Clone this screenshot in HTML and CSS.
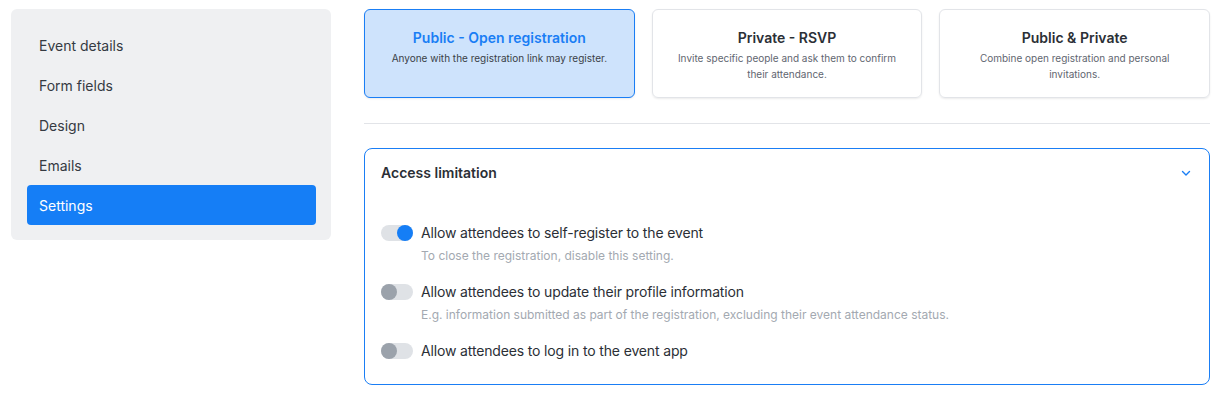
FILE: index.html
```html
<!DOCTYPE html>
<html lang="en">
<head>
  <meta charset="UTF-8">
  <meta name="viewport" content="width=device-width, initial-scale=1.0">
  <title>Event settings</title>
  <link rel="stylesheet" href="styles.css">
</head>
<body>
  <div class="layout">
    <nav class="sidebar">
      <a class="nav-item" href="#">Event details</a>
      <a class="nav-item" href="#">Form fields</a>
      <a class="nav-item" href="#">Design</a>
      <a class="nav-item" href="#">Emails</a>
      <a class="nav-item active" href="#">Settings</a>
    </nav>

    <main class="content">
      <div class="reg-types">
        <div class="reg-card selected">
          <div class="reg-title">Public - Open registration</div>
          <div class="reg-desc">Anyone with the registration link may register.</div>
        </div>
        <div class="reg-card">
          <div class="reg-title">Private - RSVP</div>
          <div class="reg-desc">Invite specific people and ask them to confirm their attendance.</div>
        </div>
        <div class="reg-card">
          <div class="reg-title">Public &amp; Private</div>
          <div class="reg-desc">Combine open registration and personal invitations.</div>
        </div>
      </div>

      <hr class="divider">

      <section class="panel">
        <div class="panel-header">
          <span>Access limitation</span>
          <svg class="chevron" width="12" height="12" viewBox="0 0 12 12" fill="none">
            <path d="M2.5 4.5 L6 8 L9.5 4.5" stroke="#1a7ef5" stroke-width="1.4" stroke-linecap="round" stroke-linejoin="round"/>
          </svg>
        </div>
        <div class="panel-body">
          <div class="setting">
            <span class="toggle on"><span class="knob"></span></span>
            <div class="setting-text">
              <div class="setting-label">Allow attendees to self-register to the event</div>
              <div class="setting-hint">To close the registration, disable this setting.</div>
            </div>
          </div>
          <div class="setting">
            <span class="toggle"><span class="knob"></span></span>
            <div class="setting-text">
              <div class="setting-label">Allow attendees to update their profile information</div>
              <div class="setting-hint">E.g. information submitted as part of the registration, excluding their event attendance status.</div>
            </div>
          </div>
          <div class="setting">
            <span class="toggle"><span class="knob"></span></span>
            <div class="setting-text">
              <div class="setting-label">Allow attendees to log in to the event app</div>
            </div>
          </div>
        </div>
      </section>
    </main>
  </div>
</body>
</html>
```

FILE: styles.css
```css
body {
  margin: 0;
  padding: 9px 11px;
  font-family: Inter, "Noto Sans", sans-serif;
  color: #2b2f36;
  background: #fff;
}

.layout {
  display: flex;
  align-items: flex-start;
  gap: 33px;
}

.sidebar {
  width: 320px;
  box-sizing: border-box;
  padding: 16px 15px 15px 16px;
  background-color: #eff0f2;
  border-radius: 6px;
  display: flex;
  flex-direction: column;
}

.nav-item {
  height: 40px;
  display: flex;
  align-items: center;
  padding-left: 12px;
  font-size: 14px;
  color: #353a42;
  text-decoration: none;
  border-radius: 4px;
}

.nav-item.active {
  background-color: #157ef6;
  color: #fff;
}

.content {
  flex: 1;
  min-width: 0;
}

.reg-types {
  display: grid;
  grid-template-columns: repeat(3, 1fr);
  gap: 17px;
}

.reg-card {
  height: 89px;
  box-sizing: border-box;
  padding: 19px 24px 0;
  border: 1px solid #e2e4e8;
  border-radius: 6px;
  text-align: center;
  box-shadow: 0 1px 2px rgba(0, 0, 0, 0.08);
}

.reg-card.selected {
  background-color: #cee3fc;
  border-color: #1a7ef5;
}

.reg-title {
  font-size: 14px;
  font-weight: 600;
  line-height: 18px;
  color: #2b2f36;
}

.reg-card.selected .reg-title {
  color: #1a7ef5;
}

.reg-desc {
  margin-top: 3px;
  font-size: 10px;
  line-height: 16px;
  color: #5f6670;
}

.reg-card.selected .reg-desc {
  color: #3a3f47;
}

.divider {
  margin: 25px 0 24px;
  border: 0;
  border-top: 1px solid #e2e4e8;
}

.panel {
  height: 237px;
  box-sizing: border-box;
  border: 1px solid #1a7ef5;
  border-radius: 8px;
}

.panel-header {
  display: flex;
  align-items: center;
  justify-content: space-between;
  height: 47px;
  padding: 0 17px 0 16px;
  font-size: 14px;
  font-weight: 600;
}

.panel-body {
  padding: 28px 16px 0;
  display: flex;
  flex-direction: column;
  gap: 19px;
}

.setting {
  display: flex;
  align-items: flex-start;
  gap: 8px;
}

.toggle {
  flex: none;
  margin-top: 1px;
  width: 32px;
  height: 16px;
  border-radius: 8px;
  background-color: #dfe2e6;
  display: flex;
  align-items: center;
}

.knob {
  width: 16px;
  height: 16px;
  border-radius: 50%;
  background-color: #9ba2ab;
}

.toggle.on {
  justify-content: flex-end;
}

.toggle.on .knob {
  background-color: #157ef6;
}

.setting-label {
  font-size: 14px;
  line-height: 18px;
  letter-spacing: -0.15px;
  color: #2b2f36;
}

.setting-hint {
  margin-top: 6px;
  font-size: 12px;
  line-height: 16px;
  color: #a3a9b1;
}
```
